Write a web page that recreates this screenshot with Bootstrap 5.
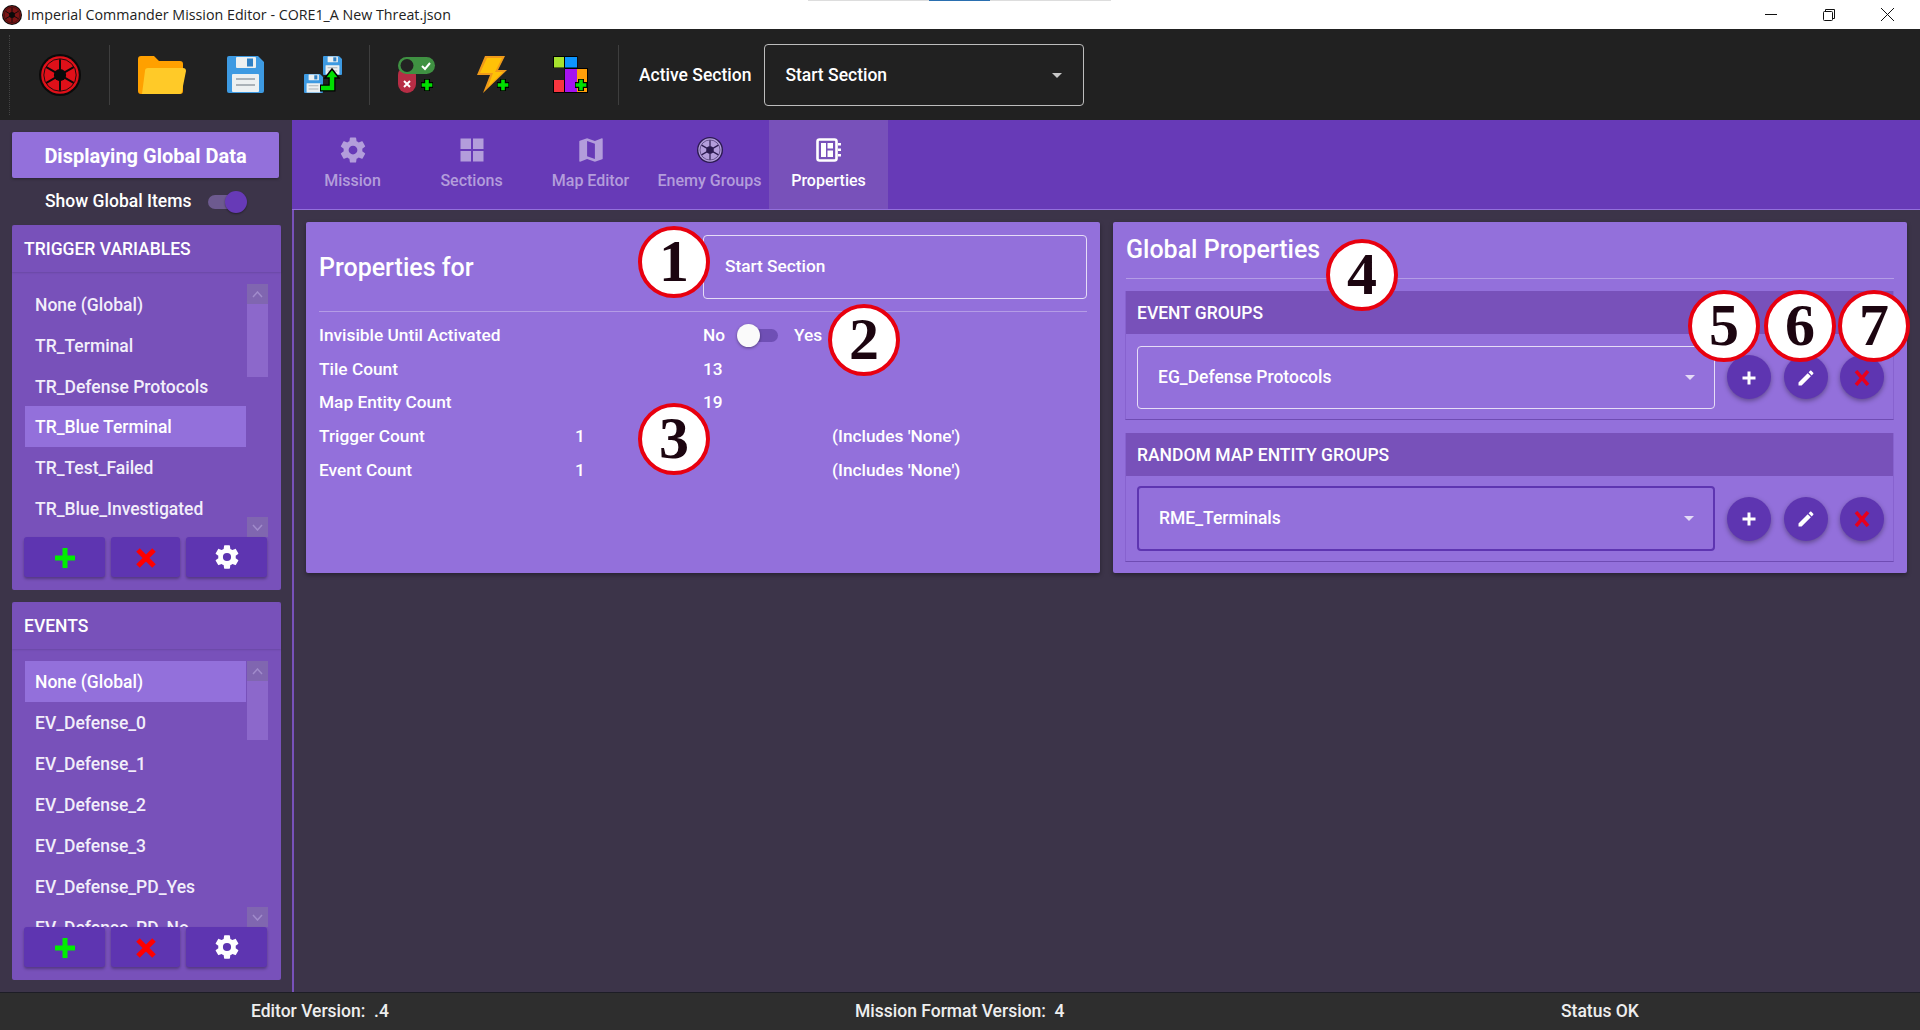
<!DOCTYPE html>
<html lang="en">
<head>
    <meta charset="UTF-8">
    <title>Imperial Commander Mission Editor</title>
    <link href="https://cdn.jsdelivr.net/npm/bootstrap@5.3.0/dist/css/bootstrap.min.css" rel="stylesheet">
    <style>
        html, body { height: 100%; overflow: hidden; }
        body { background: #3c3449; color: #fff; font-family: Roboto, "Liberation Sans", sans-serif; font-size: 16px; font-weight: 500; }
        .app-shell { position: relative; width: 1920px; height: 1030px; }

        /* title bar */
        .title-bar { height: 29px; background: #fff; color: #222; font-family: "Open Sans", "Liberation Sans", sans-serif; font-size: 14.25px; font-weight: 400; padding-left: 2px; position: relative; }
        .title-bar span { margin-left: 5px; }
        .title-strip { position: absolute; top: 0; left: 808px; width: 303px; height: 1px; background: linear-gradient(90deg, #ddd 40%, #2a6fb0 40%, #2a6fb0 60%, #ddd 60%); }
        .win-btns { margin-left: auto; padding-right: 26px; gap: 46px; }

        /* toolbar */
        .tool-bar { height: 91px; background: #212121; padding-left: 9px; }
        .tool-grip { width: 1px; height: 80px; border-left: 1px dotted #444; }
        .tool-sep { width: 1px; height: 60px; background: #3e3e3e; }
        .slot-logo { width: 99px; }
        .slot-a { width: 104px; }
        .slot-b { width: 62px; }
        .slot-c { width: 93px; }
        .slot-d { width: 94px; }
        .slot-e { width: 60px; }
        .tool-label { margin-left: 20px; font-size: 17.5px; padding-top: 1px; }
        .dark-select { width: 320px; height: 62px; margin-left: 13px; border: 1px solid #bdbdbd; border-radius: 4px; padding: 1px 21px 0 20px; font-size: 17.5px; }
        .drop-caret { width: 0; height: 0; margin-left: auto; border-left: 5px solid transparent; border-right: 5px solid transparent; border-top: 5px solid currentColor; opacity: .75; }

        /* sidebar */
        .work-area { height: 872px; }
        .side-bar { width: 292px; padding: 12px 11px 0 12px; }
        .global-btn { display: block; height: 46px; width: 267px; padding-top: 8px; background: #9370db; color: #fff; font-size: 20px; font-weight: 700; border: 0; border-radius: 2px; box-shadow: 0 1px 3px rgba(0,0,0,.35); }
        .global-row { height: 47px; padding-left: 33px; font-size: 17.5px; }
        .side-card { background: #7851ba; border: 0; border-radius: 2px; width: 269px; color: #fff; }
        .side-card .card-header { flex: none; height: 47px; background: #7851ba; border: 0; padding: 1px 12px 0; font-size: 17.5px; display: flex; align-items: center; box-shadow: 0 1px 2px rgba(0,0,0,.12); }
        .trig-card { height: 365px; }
        .ev-card { height: 378px; margin-top: 12px; }
        .list-wrap { min-height: 0; padding: 12px 13px 0 13px; }
        .side-list { flex: 1; overflow: hidden; border-radius: 0; }
        .side-list .list-group-item { flex: none; height: 41px; line-height: 42px; padding: 0 10px; background: transparent; color: #f2eefa; border: 0; border-radius: 0; font-size: 17.5px; white-space: nowrap; }
        .side-list .list-group-item.active { background: #9370db; color: #fff; }
        .fake-scroll { width: 21px; margin-left: 1px; }
        .scroll-arrow { height: 20px; background: #8066b0; color: #a08bcb; }
        .scroll-thumb { background: #8c68cb; }
        .thumb-a { height: 73px; }
        .thumb-b { height: 59px; }
        .side-foot { height: 53px; padding: 0 13px 13px 12px; gap: 6px; }
        .side-foot .btn { height: 40px; padding: 0; background: #5e35b1; border: 0; border-radius: 3px; box-shadow: 0 2px 3px rgba(0,0,0,.3); }
        .foot-wide { width: 81px; }
        .foot-mid { width: 69px; }

        /* tabs */
        .main-pane { border-left: 2px solid #7851ba; min-width: 0; }
        .tab-strip { height: 90px; margin-left: -2px; padding-left: 1px; background: #673ab7; border-bottom: 1px solid #9370db; }
        .tab-btn { width: 119px; height: 89px; padding-top: 17px; color: #b39ddb; font-size: 16px; line-height: 1; }
        .tab-btn svg { height: 26px; margin-bottom: 10px; overflow: visible; }
        .tab-btn.on { background: #7851ba; color: #fff; }

        /* cards */
        .card-area { padding: 12px 13px 0 12px; gap: 13px; }
        .prop-card { flex: 1 1 0; height: 351px; background: #9370db; color: #fff; border: 0; border-radius: 2px; padding: 0 13px; box-shadow: 0 2px 4px rgba(0,0,0,.35); }
        .prop-head { height: 90px; border-bottom: 1px solid #b49ce6; font-size: 25px; }
        .head-text { padding-top: 2px; }
        .name-box { width: 384px; height: 64px; margin-left: auto; border: 1px solid #e6ddf7; border-radius: 4px; padding-left: 21px; font-size: 17.3px; }
        .prop-grid { display: grid; grid-template-columns: 256px 128px 129px 1fr; grid-auto-rows: 33.75px; align-items: center; padding-top: 7px; font-size: 17.3px; }
        .span-two { grid-column: 3 / 5; }
        .col-third { grid-column: 3; }
        .col-four { grid-column: 4; }
        .mini-switch { position: relative; width: 41px; height: 13px; margin: 0 16px 0 12px; border-radius: 7px; background: #6f4fb5; }
        .mini-switch::after { content: ""; position: absolute; left: 0; top: -5px; width: 23px; height: 23px; border-radius: 50%; background: #fafafa; box-shadow: 0 1px 3px rgba(0,0,0,.4); }
        .side-switch { position: relative; width: 37px; height: 14px; margin-left: 17px; border-radius: 7px; background: #6d5a8f; }
        .side-switch::after { content: ""; position: absolute; right: -2px; top: -4px; width: 22px; height: 22px; border-radius: 50%; background: #673ab7; box-shadow: 0 1px 2px rgba(0,0,0,.4); }
        .global-head { height: 57px; border-bottom: 1px solid #b49ce6; font-size: 25px; }
        .group-box { margin: 12px 0 0 -1px; background: transparent; border: 0; border-radius: 0; border-bottom: 1px solid #6f4cb3; border-left: 1px solid #8762cf; border-right: 1px solid #8762cf; }
        .group-box + .group-box { margin-top: 13px; }
        .group-box .card-header { height: 43px; background: #7851ba; border: 0; border-radius: 0; padding: 1px 11px 0; font-size: 17.5px; }
        .group-body { height: 85px; padding: 1px 0 0 11px; }
        .group-body-b { height: 85px; padding-top: 0; }
        .group-select { width: 578px; height: 63px; border: 1px solid #e6ddf7; border-radius: 4px; padding: 0 19px 0 20px; font-size: 17.5px; }
        .group-select.focus { height: 65px; border: 2px solid #5e35b1; }
        .round-row { gap: 12.5px; margin-left: 12px; }
        .round-btn { width: 44px; height: 44px; padding: 0; background: #5e35b1; border: 0; border-radius: 50%; box-shadow: 0 2px 5px rgba(0,0,0,.35); }

        /* status bar */
        .status-bar { height: 38px; background: #2e2e2e; border-top: 1px solid #1d1d26; display: grid; grid-template-columns: 604px 706px 1fr; align-items: center; padding-left: 251px; font-size: 17.5px; color: #eee; }

        /* numbered callouts */
        .callout { position: absolute; width: 72px; height: 72px; border: 4px solid #e8000f; border-radius: 50%; background: #fff; color: #1c0510; font-family: "Liberation Serif", serif; font-weight: 700; font-size: 60px; line-height: 62px; text-align: center; }
        .call-1 { left: 638px; top: 226px; }
        .call-2 { left: 828px; top: 304px; }
        .call-3 { left: 638px; top: 403px; }
        .call-4 { left: 1326px; top: 239px; }
        .call-5 { left: 1688px; top: 290px; }
        .call-6 { left: 1764px; top: 290px; }
        .call-7 { left: 1838px; top: 290px; }
    </style>
</head>
<body>

    <!-- Shared icons -->
    <svg width="0" height="0" class="position-absolute">
        <symbol id="i-cog" viewBox="0 0 24 24"><path fill-rule="evenodd" d="M12,15.5A3.5,3.5 0 0,1 8.5,12A3.5,3.5 0 0,1 12,8.5A3.5,3.5 0 0,1 15.5,12A3.5,3.5 0 0,1 12,15.5M19.43,12.97C19.47,12.65 19.5,12.33 19.5,12C19.5,11.67 19.47,11.34 19.43,11L21.54,9.37C21.73,9.22 21.78,8.95 21.66,8.73L19.66,5.27C19.54,5.05 19.27,4.96 19.05,5.05L16.56,6.05C16.04,5.66 15.5,5.32 14.87,5.07L14.5,2.42C14.46,2.18 14.25,2 14,2H10C9.75,2 9.54,2.18 9.5,2.42L9.13,5.07C8.5,5.32 7.96,5.66 7.44,6.05L4.95,5.05C4.73,4.96 4.46,5.05 4.34,5.27L2.34,8.73C2.21,8.95 2.27,9.22 2.46,9.37L4.57,11C4.53,11.34 4.5,11.67 4.5,12C4.5,12.33 4.53,12.65 4.57,12.97L2.46,14.63C2.27,14.78 2.21,15.05 2.34,15.27L4.34,18.73C4.46,18.95 4.73,19.03 4.95,18.95L7.44,17.94C7.96,18.34 8.5,18.68 9.13,18.93L9.5,21.58C9.54,21.82 9.75,22 10,22H14C14.25,22 14.46,21.82 14.5,21.58L14.87,18.93C15.5,18.67 16.04,18.34 16.56,17.94L19.05,18.95C19.27,19.03 19.54,18.95 19.66,18.73L21.66,15.27C21.78,15.05 21.73,14.78 21.54,14.63L19.43,12.97Z"/></symbol>
        <symbol id="i-emblem" viewBox="0 0 48 48">
            <circle cx="24" cy="24" r="24" style="fill:var(--em-line)"/>
            <circle cx="24" cy="24" r="21.500" style="fill:var(--em-disc)"/>
            <circle cx="24" cy="24" r="18.500" fill="none" style="stroke:var(--em-line)" stroke-width="1"/>
            <path style="stroke:var(--em-line)" stroke-width="2.200" d="M24 6V42M8.400 15L39.600 33M8.400 33L39.600 15"/>
            <circle cx="24" cy="24" r="7" style="fill:var(--em-line)"/>
        </symbol>
        <symbol id="i-floppy" viewBox="0 0 37 37">
            <path fill="#3d9ae2" d="M2 0H31L37 6V35A2 2 0 0 1 35 37H2A2 2 0 0 1 0 35V2A2 2 0 0 1 2 0Z"/>
            <rect x="9" y="1" width="20" height="11" rx="1" fill="#ecf0f1"/>
            <rect x="20" y="2.500" width="6" height="8" fill="#2f80c4"/>
            <rect x="5" y="18" width="27" height="18" rx="1" fill="#ecf0f1"/>
            <path stroke="#aab2b8" stroke-width="2" d="M9 23H28M9 29H28"/>
        </symbol>
        <symbol id="i-plus-out" viewBox="0 0 14 14">
            <path stroke="#000" stroke-width="6" d="M7 1V13M1 7H13"/>
            <path stroke="#00e000" stroke-width="3.600" d="M7 1.700V12.300M1.700 7H12.300"/>
        </symbol>
        <symbol id="i-pencil" viewBox="0 0 24 24"><path d="M20.71,7.04C21.1,6.65 21.1,6 20.71,5.63L18.37,3.29C18,2.9 17.35,2.9 16.96,3.29L15.12,5.12L18.87,8.87M3,17.25V21H6.75L17.81,9.93L14.06,6.18L3,17.25Z"/></symbol>
    </svg>

    <div class="app-shell d-flex flex-column">

        <!-- Title bar -->
        <div class="title-bar d-flex align-items-center">
            <svg width="20" height="20"><use href="#i-emblem" style="--em-disc:#7c1414;--em-line:#0a0a0a"/></svg>
            <span>Imperial Commander Mission Editor - CORE1_A New Threat.json</span>
            <div class="title-strip"></div>
            <div class="win-btns d-flex align-items-center">
                <svg width="12" height="12" viewBox="0 0 12 12"><path stroke="#111" d="M0 5.500H12"/></svg>
                <svg width="12" height="12" viewBox="0 0 12 12" fill="none" stroke="#111"><rect x=".5" y="2.500" width="9" height="9" rx="1"/><path d="M2.500 2.500V.5H11.500V9.500H9.500"/></svg>
                <svg width="13" height="13" viewBox="0 0 13 13"><path stroke="#111" d="M0 0L13 13M13 0L0 13"/></svg>
            </div>
        </div>

        <!-- Toolbar -->
        <div class="tool-bar d-flex align-items-center">
            <div class="tool-grip"></div>
            <div class="slot-logo d-flex justify-content-center">
                <svg width="42" height="42"><use href="#i-emblem" style="--em-disc:#e01019;--em-line:#0a0a0a"/></svg>
            </div>
            <div class="tool-sep"></div>
            <div class="slot-a d-flex justify-content-center">
                <svg width="48" height="38" viewBox="0 0 48 38">
                    <path fill="#ffa000" d="M3 0H16L21 5H42A3 3 0 0 1 45 8V35A3 3 0 0 1 42 38H3A3 3 0 0 1 0 35V3A3 3 0 0 1 3 0Z"/>
                    <path fill="#ffca28" d="M10 12H45A3 3 0 0 1 48 15L44 35A3 3 0 0 1 41 38H4L7 15A3 3 0 0 1 10 12Z"/>
                </svg>
            </div>
            <div class="slot-b d-flex justify-content-center">
                <svg width="37" height="37"><use href="#i-floppy"/></svg>
            </div>
            <div class="slot-c d-flex justify-content-center">
                <svg width="38" height="37" viewBox="304 56 38 37">
                    <use href="#i-floppy" x="304" y="74" width="19" height="19"/>
                    <use href="#i-floppy" x="323" y="56" width="19" height="19"/>
                    <path d="M320 88H332V77" fill="none" stroke="#000" stroke-width="7"/>
                    <path d="M325 78L332 69L339 78Z" fill="#00e000" stroke="#000" stroke-width="1.500"/>
                    <path d="M321 88H332V76" fill="none" stroke="#00e000" stroke-width="4.500"/>
                </svg>
            </div>
            <div class="tool-sep"></div>
            <div class="slot-d d-flex justify-content-center">
                <svg width="38" height="37" viewBox="398 56 38 37">
                    <rect x="398" y="66" width="18" height="27" rx="9" fill="#b72d45"/>
                    <rect x="398" y="57" width="37" height="17" rx="8.500" fill="#3f9142"/>
                    <circle cx="407" cy="65.500" r="6.500" fill="#222"/>
                    <path d="M422 66L425 69L430 63" fill="none" stroke="#fff" stroke-width="2"/>
                    <path d="M404 81L410 87M410 81L404 87" stroke="#fff" stroke-width="2"/>
                    <use href="#i-plus-out" x="420" y="78" width="14" height="14"/>
                </svg>
            </div>
            <div class="slot-e d-flex justify-content-center">
                <svg width="34" height="37" viewBox="479 56 34 37">
                    <path fill="#f09a1a" d="M487 56H507L500 70H509L485 93L492 75H479Z"/>
                    <path fill="#ffc107" d="M489 58H504L497 72H505L490 87L495 73H482Z"/>
                    <use href="#i-plus-out" x="498" y="78" width="14" height="14"/>
                </svg>
            </div>
            <div class="slot-d d-flex justify-content-center">
                <svg width="36" height="37" viewBox="554 56 36 37">
                    <path fill="#000" d="M554 56H578.500V68H589V93H554V80H565.500V68H554Z"/>
                    <rect x="555" y="57" width="10" height="10.500" fill="#a6e22e"/>
                    <rect x="566" y="57" width="12" height="10.500" fill="#0d95ff"/>
                    <rect x="578" y="69" width="10" height="23" fill="#ff9f0a"/>
                    <rect x="566" y="69" width="12" height="23" fill="#a512f0"/>
                    <rect x="555" y="80" width="10" height="12" fill="#f8353e"/>
                    <use href="#i-plus-out" x="575" y="78" width="14" height="14"/>
                </svg>
            </div>
            <div class="tool-sep"></div>
            <div class="tool-label">Active Section</div>
            <div class="dark-select d-flex align-items-center">Start Section<span class="drop-caret"></span></div>
        </div>

        <div class="work-area d-flex">

            <!-- Sidebar -->
            <div class="side-bar flex-shrink-0">
                <button class="btn global-btn">Displaying Global Data</button>
                <div class="global-row d-flex align-items-center">Show Global Items<div class="side-switch"></div></div>

                <div class="card side-card trig-card">
                    <div class="card-header">TRIGGER VARIABLES</div>
                    <div class="list-wrap d-flex flex-grow-1">
                        <div class="list-group side-list">
                            <div class="list-group-item">None (Global)</div>
                            <div class="list-group-item">TR_Terminal</div>
                            <div class="list-group-item">TR_Defense Protocols</div>
                            <div class="list-group-item active">TR_Blue Terminal</div>
                            <div class="list-group-item">TR_Test_Failed</div>
                            <div class="list-group-item">TR_Blue_Investigated</div>
                        </div>
                        <div class="fake-scroll d-flex flex-column">
                            <div class="scroll-arrow d-flex align-items-center justify-content-center"><svg width="11" height="7" viewBox="0 0 11 7" fill="none" stroke="currentColor" stroke-width="1.500"><path d="M1 6L5.500 1L10 6"/></svg></div>
                            <div class="scroll-thumb thumb-a"></div>
                            <div class="scroll-arrow d-flex align-items-center justify-content-center mt-auto"><svg width="11" height="7" viewBox="0 0 11 7" fill="none" stroke="currentColor" stroke-width="1.500"><path d="M1 1L5.500 6L10 1"/></svg></div>
                        </div>
                    </div>
                    <div class="side-foot d-flex flex-shrink-0">
                        <button class="btn foot-wide"><svg width="22" height="22" viewBox="0 0 22 22"><path stroke="#00f000" stroke-width="5" d="M11 1V21M1 11H21"/></svg></button>
                        <button class="btn foot-mid"><svg width="20" height="20" viewBox="0 0 20 20"><path stroke="#f00" stroke-width="5" d="M2 2L18 18M18 2L2 18"/></svg></button>
                        <button class="btn foot-wide"><svg width="28" height="28" fill="#fff"><use href="#i-cog"/></svg></button>
                    </div>
                </div>

                <div class="card side-card ev-card">
                    <div class="card-header">EVENTS</div>
                    <div class="list-wrap d-flex flex-grow-1">
                        <div class="list-group side-list">
                            <div class="list-group-item active">None (Global)</div>
                            <div class="list-group-item">EV_Defense_0</div>
                            <div class="list-group-item">EV_Defense_1</div>
                            <div class="list-group-item">EV_Defense_2</div>
                            <div class="list-group-item">EV_Defense_3</div>
                            <div class="list-group-item">EV_Defense_PD_Yes</div>
                            <div class="list-group-item">EV_Defense_PD_No</div>
                        </div>
                        <div class="fake-scroll d-flex flex-column">
                            <div class="scroll-arrow d-flex align-items-center justify-content-center"><svg width="11" height="7" viewBox="0 0 11 7" fill="none" stroke="currentColor" stroke-width="1.500"><path d="M1 6L5.500 1L10 6"/></svg></div>
                            <div class="scroll-thumb thumb-b"></div>
                            <div class="scroll-arrow d-flex align-items-center justify-content-center mt-auto"><svg width="11" height="7" viewBox="0 0 11 7" fill="none" stroke="currentColor" stroke-width="1.500"><path d="M1 1L5.500 6L10 1"/></svg></div>
                        </div>
                    </div>
                    <div class="side-foot d-flex flex-shrink-0">
                        <button class="btn foot-wide"><svg width="22" height="22" viewBox="0 0 22 22"><path stroke="#00f000" stroke-width="5" d="M11 1V21M1 11H21"/></svg></button>
                        <button class="btn foot-mid"><svg width="20" height="20" viewBox="0 0 20 20"><path stroke="#f00" stroke-width="5" d="M2 2L18 18M18 2L2 18"/></svg></button>
                        <button class="btn foot-wide"><svg width="28" height="28" fill="#fff"><use href="#i-cog"/></svg></button>
                    </div>
                </div>
            </div>

            <!-- Main pane -->
            <div class="main-pane flex-grow-1">
                <div class="tab-strip d-flex">
                    <div class="tab-btn d-flex flex-column align-items-center">
                        <svg width="26" height="26" fill="currentColor"><use href="#i-cog" x="-2" y="-2" width="30" height="30"/></svg>Mission
                    </div>
                    <div class="tab-btn d-flex flex-column align-items-center">
                        <svg width="24" height="26" viewBox="0 0 24 24" fill="currentColor"><path d="M.5 0.500H11V11H.5ZM13 0.500H23.500V11H13ZM.5 13H11V23.500H.5ZM13 13H23.500V23.500H13Z"/></svg>Sections
                    </div>
                    <div class="tab-btn d-flex flex-column align-items-center">
                        <svg width="26" height="26" viewBox="2 2 20 20" fill="currentColor"><path d="M20.5,3L20.34,3.03L15,5.1L9,3L3.36,4.9C3.15,4.97 3,5.15 3,5.38V20.5A0.5,0.5 0 0,0 3.5,21L3.66,20.97L9,18.9L15,21L20.64,19.1C20.85,19.03 21,18.85 21,18.62V3.5A0.5,0.5 0 0,0 20.5,3M15,19L9,16.89V5L15,7.11V19Z"/></svg>Map Editor
                    </div>
                    <div class="tab-btn d-flex flex-column align-items-center">
                        <svg width="30" height="26" viewBox="0 0 48 48"><use href="#i-emblem" style="--em-disc:#b39ddb;--em-line:#2b1a50"/></svg>Enemy Groups
                    </div>
                    <div class="tab-btn on d-flex flex-column align-items-center">
                        <svg width="26" height="26" viewBox="0 0 26 24" fill="#fff">
                            <rect x="1.500" y="1.500" width="19" height="21" rx="2" fill="none" stroke="#fff" stroke-width="2.600"/>
                            <path d="M5 5H10V19H5ZM11.500 5H17V10.500H11.500ZM11.500 12.500H17V19H11.500ZM22 5H25V7.500H22ZM22 10.500H25V13H22ZM22 16H25V18.500H22Z"/>
                        </svg>Properties
                    </div>
                </div>

                <div class="card-area d-flex">
                    <!-- Properties for -->
                    <div class="card prop-card">
                        <div class="prop-head d-flex align-items-center"><span class="head-text">Properties for</span><div class="name-box d-flex align-items-center">Start Section</div></div>
                        <div class="prop-grid">
                            <div>Invisible Until Activated</div><div></div>
                            <div class="span-two d-flex align-items-center">No<div class="mini-switch"></div>Yes</div>
                            <div>Tile Count</div><div></div><div class="col-third">13</div><div></div>
                            <div>Map Entity Count</div><div></div><div class="col-third">19</div><div></div>
                            <div>Trigger Count</div><div>1</div><div></div><div class="col-four">(Includes 'None')</div>
                            <div>Event Count</div><div>1</div><div></div><div class="col-four">(Includes 'None')</div>
                        </div>
                    </div>

                    <!-- Global Properties -->
                    <div class="card prop-card">
                        <div class="global-head d-flex align-items-center">Global Properties</div>
                        <div class="card group-box">
                            <div class="card-header d-flex align-items-center">EVENT GROUPS</div>
                            <div class="group-body d-flex align-items-center">
                                <div class="group-select d-flex align-items-center">EG_Defense Protocols<span class="drop-caret"></span></div>
                                <div class="round-row d-flex">
                                    <button class="btn round-btn"><svg width="22" height="22" viewBox="0 0 22 22"><path stroke="#fff" stroke-width="3" d="M11 4.500V17.500M4.500 11H17.500"/></svg></button>
                                    <button class="btn round-btn"><svg width="20" height="20" fill="#fff"><use href="#i-pencil"/></svg></button>
                                    <button class="btn round-btn"><svg width="16" height="16" viewBox="0 0 16 16"><path stroke="#e8001c" stroke-width="3.500" d="M2 1L14 15M14 1L2 15"/></svg></button>
                                </div>
                            </div>
                        </div>
                        <div class="card group-box">
                            <div class="card-header d-flex align-items-center">RANDOM MAP ENTITY GROUPS</div>
                            <div class="group-body group-body-b d-flex align-items-center">
                                <div class="group-select focus d-flex align-items-center">RME_Terminals<span class="drop-caret"></span></div>
                                <div class="round-row d-flex">
                                    <button class="btn round-btn"><svg width="22" height="22" viewBox="0 0 22 22"><path stroke="#fff" stroke-width="3" d="M11 4.500V17.500M4.500 11H17.500"/></svg></button>
                                    <button class="btn round-btn"><svg width="20" height="20" fill="#fff"><use href="#i-pencil"/></svg></button>
                                    <button class="btn round-btn"><svg width="16" height="16" viewBox="0 0 16 16"><path stroke="#e8001c" stroke-width="3.500" d="M2 1L14 15M14 1L2 15"/></svg></button>
                                </div>
                            </div>
                        </div>
                    </div>
                </div>
            </div>
        </div>

        <!-- Status bar -->
        <div class="status-bar">
            <div>Editor Version: &nbsp;.4</div>
            <div>Mission Format Version: &nbsp;4</div>
            <div>Status OK</div>
        </div>

        <!-- Numbered callouts over the screen -->
        <div class="callout call-1">1</div>
        <div class="callout call-2">2</div>
        <div class="callout call-3">3</div>
        <div class="callout call-4">4</div>
        <div class="callout call-5">5</div>
        <div class="callout call-6">6</div>
        <div class="callout call-7">7</div>
    </div>

    <script src="https://cdn.jsdelivr.net/npm/bootstrap@5.3.0/dist/js/bootstrap.bundle.min.js"></script>
</body>
</html>
